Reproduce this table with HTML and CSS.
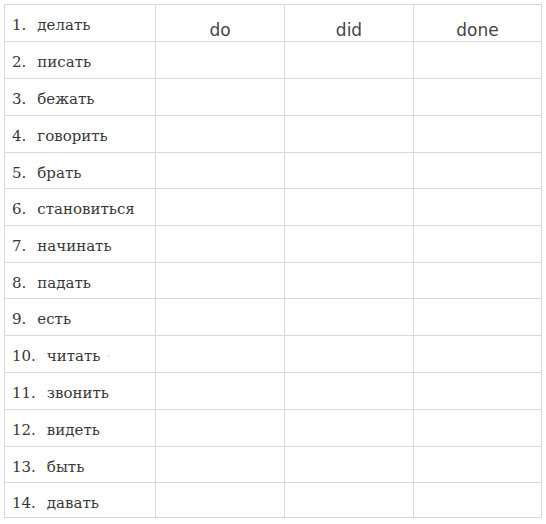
FILE: index.html
```html
<!DOCTYPE html>
<html lang="ru">
<head>
<meta charset="utf-8">
<title>Verbs</title>
<link rel="stylesheet" href="styles.css">
</head>
<body>
<div class="sheet">
  <div class="cell verb"><span class="num">1.</span><span class="word">делать</span></div>
  <div class="cell head">do</div>
  <div class="cell head">did</div>
  <div class="cell head">done</div>

  <div class="cell verb"><span class="num">2.</span><span class="word">писать</span></div>
  <div class="cell"></div><div class="cell"></div><div class="cell"></div>

  <div class="cell verb"><span class="num">3.</span><span class="word">бежать</span></div>
  <div class="cell"></div><div class="cell"></div><div class="cell"></div>

  <div class="cell verb"><span class="num">4.</span><span class="word">говорить</span></div>
  <div class="cell"></div><div class="cell"></div><div class="cell"></div>

  <div class="cell verb"><span class="num">5.</span><span class="word">брать</span></div>
  <div class="cell"></div><div class="cell"></div><div class="cell"></div>

  <div class="cell verb"><span class="num">6.</span><span class="word">становиться</span></div>
  <div class="cell"></div><div class="cell"></div><div class="cell"></div>

  <div class="cell verb"><span class="num">7.</span><span class="word">начинать</span></div>
  <div class="cell"></div><div class="cell"></div><div class="cell"></div>

  <div class="cell verb"><span class="num">8.</span><span class="word">падать</span></div>
  <div class="cell"></div><div class="cell"></div><div class="cell"></div>

  <div class="cell verb"><span class="num">9.</span><span class="word">есть</span></div>
  <div class="cell"></div><div class="cell"></div><div class="cell"></div>

  <div class="cell verb"><span class="num">10.</span><span class="word">читать</span><span class="speck">·</span></div>
  <div class="cell"></div><div class="cell"></div><div class="cell"></div>

  <div class="cell verb"><span class="num">11.</span><span class="word">звонить</span></div>
  <div class="cell"></div><div class="cell"></div><div class="cell"></div>

  <div class="cell verb"><span class="num">12.</span><span class="word">видеть</span></div>
  <div class="cell"></div><div class="cell"></div><div class="cell"></div>

  <div class="cell verb"><span class="num">13.</span><span class="word">быть</span></div>
  <div class="cell"></div><div class="cell"></div><div class="cell"></div>

  <div class="cell verb"><span class="num">14.</span><span class="word">давать</span></div>
  <div class="cell"></div><div class="cell"></div><div class="cell"></div>
</div>
</body>
</html>
```
FILE: styles.css
```css
html, body {
  margin: 0;
  padding: 0;
  background: #ffffff;
}

.sheet {
  display: grid;
  grid-template-columns: 151px 129px 129px 128px;
  grid-template-rows: 37px 37px 37px 37px 36px 37px 37px 36px 37px 37px 37px 37px 36px 35px;
  margin: 4px 0 0 4px;
  width: max-content;
  border-top: 1px solid #d6d6d6;
  border-left: 1px solid #d6d6d6;
}

.cell {
  box-sizing: border-box;
  border-right: 1px solid #d9d9d9;
  border-bottom: 1px solid #d9d9d9;
}

.verb {
  display: flex;
  align-items: baseline;
  padding: 12px 0 0 7px;
  font-family: "DejaVu Serif", "Liberation Serif", serif;
  font-size: 15px;
  line-height: 16px;
  color: #383838;
  white-space: nowrap;
}

.num {
  margin-right: 11px;
}

.speck {
  margin-left: 6px;
  color: #cfcfcf;
  font-size: 12px;
}

.head {
  padding-top: 15px;
  text-align: center;
  font-family: "Comic Sans MS", "DejaVu Sans", sans-serif;
  font-size: 17px;
  line-height: 20px;
  color: #454545;
}
```
